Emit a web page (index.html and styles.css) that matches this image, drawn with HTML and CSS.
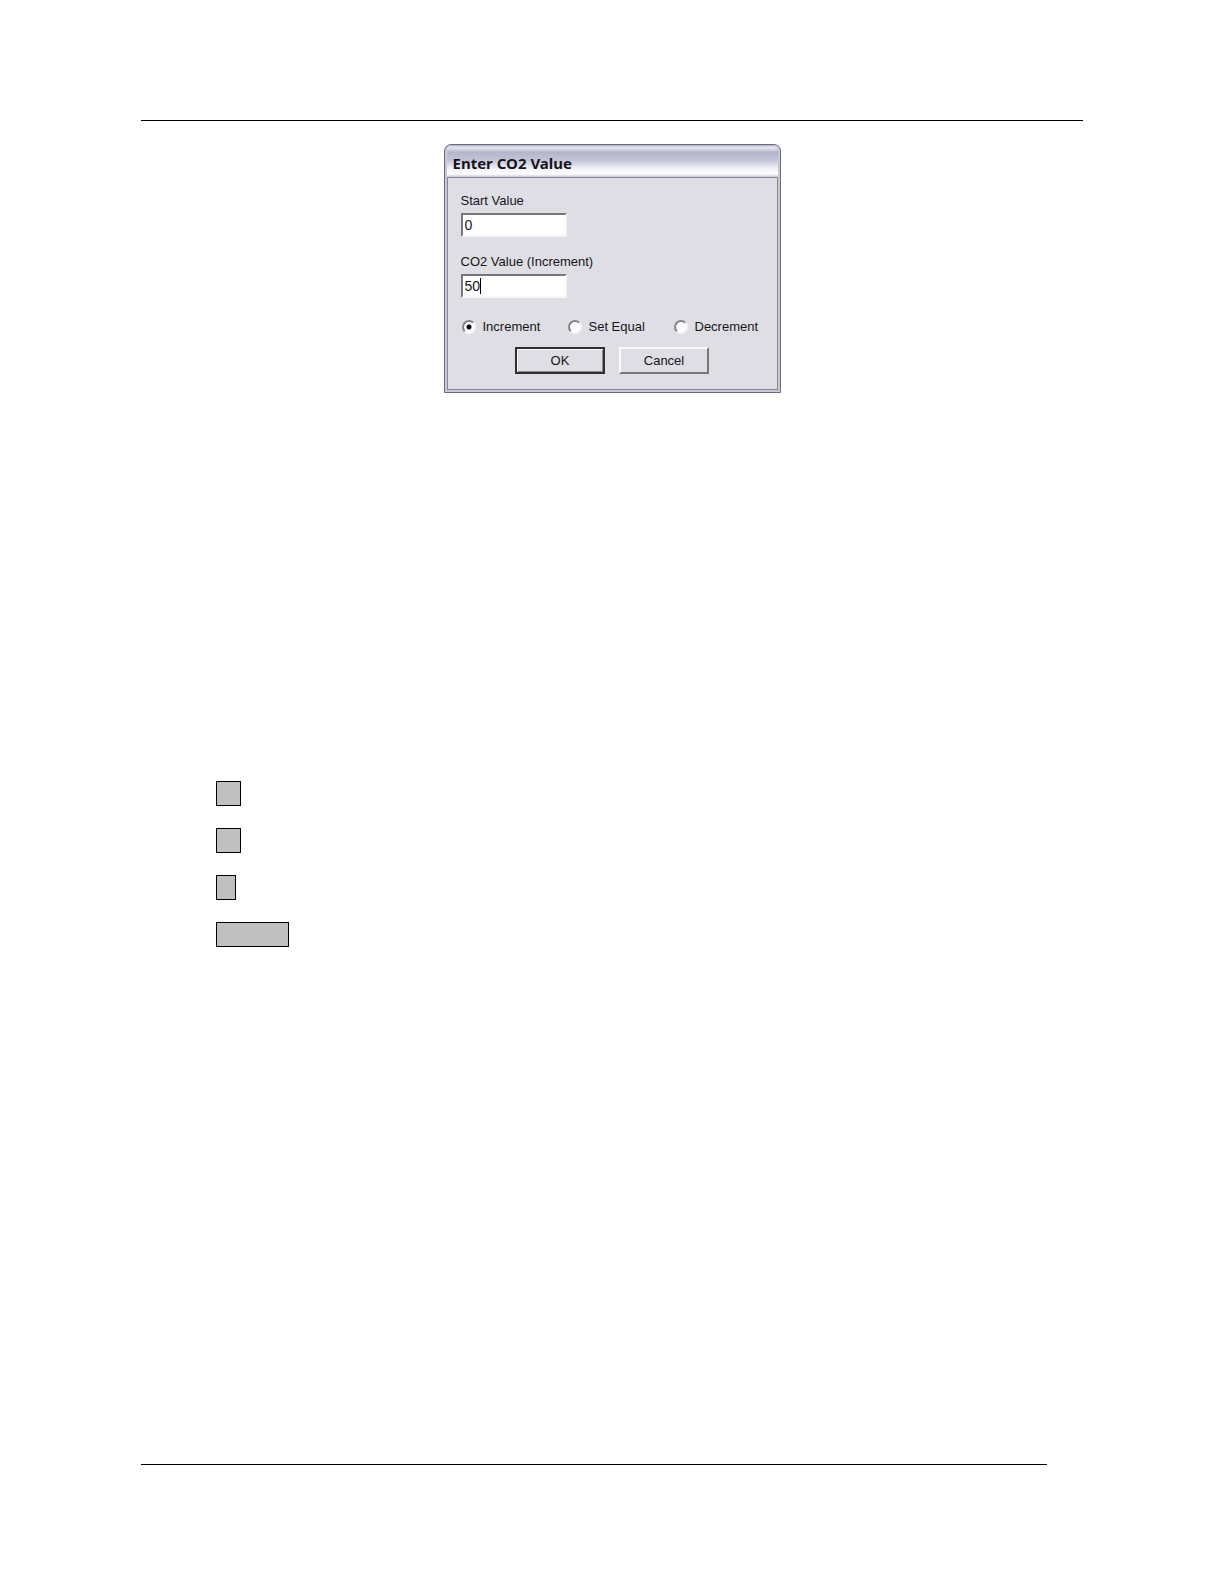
FILE: index.html
```html
<!DOCTYPE html>
<html lang="en">
<head>
    <meta charset="UTF-8">
    <meta name="viewport" content="width=device-width, initial-scale=1.0">
    <title>Enter CO2 Value</title>
    <link rel="stylesheet" href="styles.css">
</head>
<body>

<div class="page">

    <!-- Header rule -->
    <header class="page-header"></header>

    <main class="content">

        <!-- Dialog -->
        <form class="dialog">
            <h1 class="dialog-title">Enter CO2 Value</h1>
            <div class="dialog-body">
                <div class="field">
                    <label for="startValue">Start Value</label>
                    <input type="text" id="startValue" value="0">
                </div>
                <div class="field">
                    <label for="co2Value">CO2 Value (Increment)</label>
                    <div class="active-input">
                        <input type="text" id="co2Value" value="50">
                        <span class="caret"></span>
                    </div>
                </div>

                <div class="options">
                    <label><input type="radio" name="mode" value="increment" checked> Increment</label>
                    <label><input type="radio" name="mode" value="equal"> Set Equal</label>
                    <label><input type="radio" name="mode" value="decrement"> Decrement</label>
                </div>

                <div class="buttons">
                    <button type="button" class="default">OK</button>
                    <button type="button">Cancel</button>
                </div>
            </div>
        </form>

        <!-- Blank keys -->
        <div class="keys">
            <div class="key"></div>
            <div class="key"></div>
            <div class="key key-narrow"></div>
            <div class="key key-wide"></div>
        </div>

    </main>

    <!-- Footer rule -->
    <footer class="page-footer"></footer>

</div>

</body>
</html>
```
FILE: styles.css
```css
* {
    box-sizing: border-box;
}

body {
    margin: 0;
    background-color: white;
    color: #15151a;
    font-family: "Liberation Sans", Arial, sans-serif;
    font-size: 13px;
    line-height: 16px;
}

.page {
    display: flex;
    flex-direction: column;
    min-height: 100vh;
    padding: 120px 141px 119px;
}

.page-header {
    border-top: 1px solid black;
}

.content {
    flex: 1;
    padding-top: 23px;
}

.page-footer {
    margin-right: 36px;
    border-top: 1px solid black;
}

/* Dialog */
.dialog {
    width: 337px;
    margin: 0 auto;
    padding: 0 2px 2px;
    background-color: #c9c8d6;
    border: 1px solid #6b6a7c;
    border-radius: 7px 7px 0 0;
}

.dialog-title {
    margin: 0;
    padding: 2px 6px 0;
    height: 32px;
    background: linear-gradient(#a9a9be 0, #e4e4f0 2px, #dcdcea 4px, #b4b4cc 7px, #c3c3d8 15px, #f2f2f8 24px, #ffffff 29px, #c9c8d8 32px);
    border-radius: 6px 6px 0 0;
    font-family: "Noto Sans", "Open Sans", sans-serif;
    font-size: 15px;
    font-weight: bold;
    line-height: 32px;
}

.dialog-body {
    padding: 15px 13px;
    background-color: #dfdee4;
    border: 1px solid #85849a;
}

.field {
    margin-bottom: 17px;
}

.field label {
    display: block;
    margin-bottom: 4px;
}

.field input {
    display: block;
    width: 106px;
    height: 24px;
    padding: 0 2px;
    background-color: white;
    border: 2px solid;
    border-color: #77767a #f6f6f8 #f6f6f8 #77767a;
    color: #15151a;
    font-family: inherit;
    font-size: 14px;
    outline: none;
}

.active-input {
    position: relative;
    width: 106px;
}

.caret {
    position: absolute;
    top: 4px;
    left: 19px;
    width: 1px;
    height: 16px;
    background-color: black;
}

.options {
    display: grid;
    grid-template-columns: 106px 106px auto;
    margin-top: 21px;
}

.options label {
    display: flex;
    align-items: center;
    gap: 7px;
}

.options input {
    appearance: none;
    width: 14px;
    height: 14px;
    margin: 0 0 0 1px;
    background-color: white;
    border: 2px solid;
    border-color: #858489 #f6f6f8 #f6f6f8 #858489;
    border-radius: 50%;
}

.options input:checked {
    background-image: radial-gradient(circle, black 2px, transparent 3px);
}

.buttons {
    display: flex;
    justify-content: center;
    gap: 14px;
    margin-top: 12px;
}

.buttons button {
    width: 90px;
    height: 27px;
    padding: 0;
    background-color: #dfdee4;
    border: 2px solid;
    border-color: #fafafc #77767a #77767a #fafafc;
    color: #15151a;
    font-family: inherit;
    font-size: 13px;
}

.buttons .default {
    border-color: #303034;
    box-shadow: inset 1px 1px #fafafc, inset -1px -1px #8a898f;
}

/* Blank keys */
.keys {
    display: flex;
    flex-direction: column;
    gap: 22px;
    margin-top: 388px;
    margin-left: 75px;
}

.key {
    width: 25px;
    height: 25px;
    background-color: #c0c0c0;
    border: 1px solid black;
}

.key-narrow {
    width: 20px;
}

.key-wide {
    width: 73px;
}
```
